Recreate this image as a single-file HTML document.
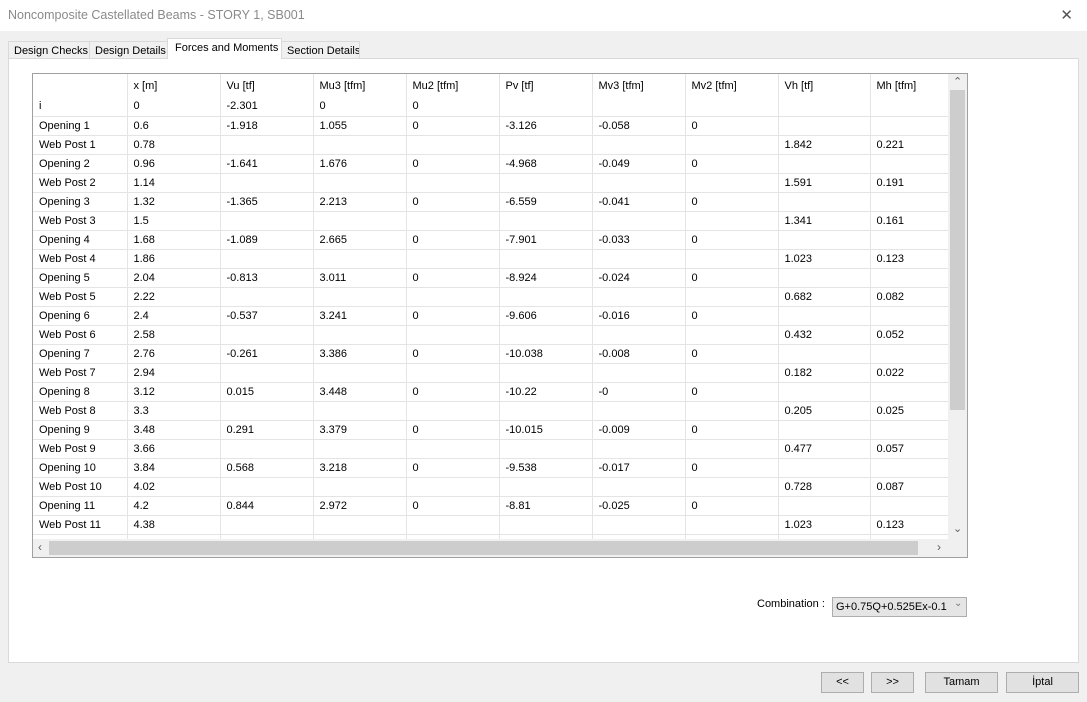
<!DOCTYPE html>
<html><head><style>
*{margin:0;padding:0;box-sizing:border-box}
body{width:1087px;height:702px;background:#f0f0f0;font-family:"Liberation Sans",sans-serif;font-size:11px;color:#000;position:relative;overflow:hidden}
.abs{position:absolute;white-space:nowrap}
#title{left:0;top:0;width:1087px;height:31px;background:#fff;}
#title span{position:absolute;left:8px;top:8px;font-size:12.5px;color:#8a8a8a}
#close{position:absolute;right:14px;top:6px;font-size:15px;color:#555}
.tab{position:absolute;top:41px;height:18px;background:#f0f0f0;border:1px solid #d9d9d9;border-bottom:none;font-size:11px;padding:3px 0 0 5px;white-space:nowrap;overflow:hidden}
#panel{left:8px;top:58px;width:1071px;height:605px;background:#fff;border:1px solid #d9d9d9}
#grid{left:32px;top:73px;width:936px;height:485px;border:1px solid #a0a0a0;background:#fff;overflow:hidden}
table{border-collapse:collapse;position:absolute;left:0;top:0;table-layout:fixed}
td{height:19px;border-right:1px solid #e4e4e4;border-bottom:1px solid #e4e4e4;padding:0 6px;white-space:nowrap;overflow:hidden;font-size:11px;vertical-align:middle}
tr.h td{height:23px;border-bottom:none}
.btn{position:absolute;top:672px;height:21px;background:#e1e1e1;border:1px solid #adadad;text-align:center;line-height:19px;font-size:11px}
</style></head><body>
<div id="title" class="abs"><span>Noncomposite Castellated Beams - STORY 1, SB001</span><div id="close">✕</div></div>
<div class="tab" style="left:8px;width:82px">Design Checks</div>
<div class="tab" style="left:89px;width:79px">Design Details</div>
<div class="tab" style="left:281px;width:79px">Section Details</div>
<div id="panel" class="abs"></div>
<div class="tab" style="left:167px;top:38px;height:21px;width:115px;background:#fff;z-index:2;padding-top:3px;padding-left:7px">Forces and Moments</div>
<div id="grid" class="abs">
<table>
<colgroup><col style="width:94px"><col style="width:93px"><col style="width:93px"><col style="width:93px"><col style="width:93px"><col style="width:93px"><col style="width:93px"><col style="width:93px"><col style="width:92px"><col style="width:80px"></colgroup>
<tr class="h"><td></td><td>x [m]</td><td>Vu [tf]</td><td>Mu3 [tfm]</td><td>Mu2 [tfm]</td><td>Pv [tf]</td><td>Mv3 [tfm]</td><td>Mv2 [tfm]</td><td>Vh [tf]</td><td>Mh [tfm]</td></tr>
<tr><td>i</td><td>0</td><td>-2.301</td><td>0</td><td>0</td><td></td><td></td><td></td><td></td><td></td></tr>
<tr><td>Opening 1</td><td>0.6</td><td>-1.918</td><td>1.055</td><td>0</td><td>-3.126</td><td>-0.058</td><td>0</td><td></td><td></td></tr>
<tr><td>Web Post 1</td><td>0.78</td><td></td><td></td><td></td><td></td><td></td><td></td><td>1.842</td><td>0.221</td></tr>
<tr><td>Opening 2</td><td>0.96</td><td>-1.641</td><td>1.676</td><td>0</td><td>-4.968</td><td>-0.049</td><td>0</td><td></td><td></td></tr>
<tr><td>Web Post 2</td><td>1.14</td><td></td><td></td><td></td><td></td><td></td><td></td><td>1.591</td><td>0.191</td></tr>
<tr><td>Opening 3</td><td>1.32</td><td>-1.365</td><td>2.213</td><td>0</td><td>-6.559</td><td>-0.041</td><td>0</td><td></td><td></td></tr>
<tr><td>Web Post 3</td><td>1.5</td><td></td><td></td><td></td><td></td><td></td><td></td><td>1.341</td><td>0.161</td></tr>
<tr><td>Opening 4</td><td>1.68</td><td>-1.089</td><td>2.665</td><td>0</td><td>-7.901</td><td>-0.033</td><td>0</td><td></td><td></td></tr>
<tr><td>Web Post 4</td><td>1.86</td><td></td><td></td><td></td><td></td><td></td><td></td><td>1.023</td><td>0.123</td></tr>
<tr><td>Opening 5</td><td>2.04</td><td>-0.813</td><td>3.011</td><td>0</td><td>-8.924</td><td>-0.024</td><td>0</td><td></td><td></td></tr>
<tr><td>Web Post 5</td><td>2.22</td><td></td><td></td><td></td><td></td><td></td><td></td><td>0.682</td><td>0.082</td></tr>
<tr><td>Opening 6</td><td>2.4</td><td>-0.537</td><td>3.241</td><td>0</td><td>-9.606</td><td>-0.016</td><td>0</td><td></td><td></td></tr>
<tr><td>Web Post 6</td><td>2.58</td><td></td><td></td><td></td><td></td><td></td><td></td><td>0.432</td><td>0.052</td></tr>
<tr><td>Opening 7</td><td>2.76</td><td>-0.261</td><td>3.386</td><td>0</td><td>-10.038</td><td>-0.008</td><td>0</td><td></td><td></td></tr>
<tr><td>Web Post 7</td><td>2.94</td><td></td><td></td><td></td><td></td><td></td><td></td><td>0.182</td><td>0.022</td></tr>
<tr><td>Opening 8</td><td>3.12</td><td>0.015</td><td>3.448</td><td>0</td><td>-10.22</td><td>-0</td><td>0</td><td></td><td></td></tr>
<tr><td>Web Post 8</td><td>3.3</td><td></td><td></td><td></td><td></td><td></td><td></td><td>0.205</td><td>0.025</td></tr>
<tr><td>Opening 9</td><td>3.48</td><td>0.291</td><td>3.379</td><td>0</td><td>-10.015</td><td>-0.009</td><td>0</td><td></td><td></td></tr>
<tr><td>Web Post 9</td><td>3.66</td><td></td><td></td><td></td><td></td><td></td><td></td><td>0.477</td><td>0.057</td></tr>
<tr><td>Opening 10</td><td>3.84</td><td>0.568</td><td>3.218</td><td>0</td><td>-9.538</td><td>-0.017</td><td>0</td><td></td><td></td></tr>
<tr><td>Web Post 10</td><td>4.02</td><td></td><td></td><td></td><td></td><td></td><td></td><td>0.728</td><td>0.087</td></tr>
<tr><td>Opening 11</td><td>4.2</td><td>0.844</td><td>2.972</td><td>0</td><td>-8.81</td><td>-0.025</td><td>0</td><td></td><td></td></tr>
<tr><td>Web Post 11</td><td>4.38</td><td></td><td></td><td></td><td></td><td></td><td></td><td>1.023</td><td>0.123</td></tr>
<tr><td>Opening 12</td><td>4.56</td><td></td><td></td><td></td><td></td><td></td><td></td><td></td><td></td></tr>
</table>
<div class="abs" style="left:915px;top:0;width:19px;height:465px;background:#f0f0f0"></div>
<div class="abs" style="left:917px;top:16px;width:15px;height:320px;background:#cdcdcd"></div>
<div class="abs" style="left:920px;top:1px;font-size:11px;color:#606060">&#8963;</div>
<div class="abs" style="left:920px;top:448px;font-size:11px;color:#606060">&#8964;</div>
<div class="abs" style="left:0;top:465px;width:934px;height:18px;background:#f0f0f0"></div>
<div class="abs" style="left:16px;top:467px;width:869px;height:14px;background:#cdcdcd"></div>
<div class="abs" style="left:5px;top:466px;font-size:12px;color:#606060">&lsaquo;</div>
<div class="abs" style="left:904px;top:466px;font-size:12px;color:#606060">&rsaquo;</div>
</div>
<div class="abs" style="left:757px;top:598px;font-size:11px">Combination :</div>
<div class="abs" style="left:832px;top:597px;width:135px;height:20px;background:#e5e5e5;border:1px solid #adadad;font-size:11px;line-height:18px;padding-left:3px;overflow:hidden">G+0.75Q+0.525Ex-0.1</div>
<div class="abs" style="left:954px;top:598px;font-size:10px;color:#777">&#8964;</div>
<div class="btn" style="left:821px;width:43px">&lt;&lt;</div>
<div class="btn" style="left:871px;width:43px">&gt;&gt;</div>
<div class="btn" style="left:925px;width:73px">Tamam</div>
<div class="btn" style="left:1006px;width:73px">İptal</div>
</body></html>
